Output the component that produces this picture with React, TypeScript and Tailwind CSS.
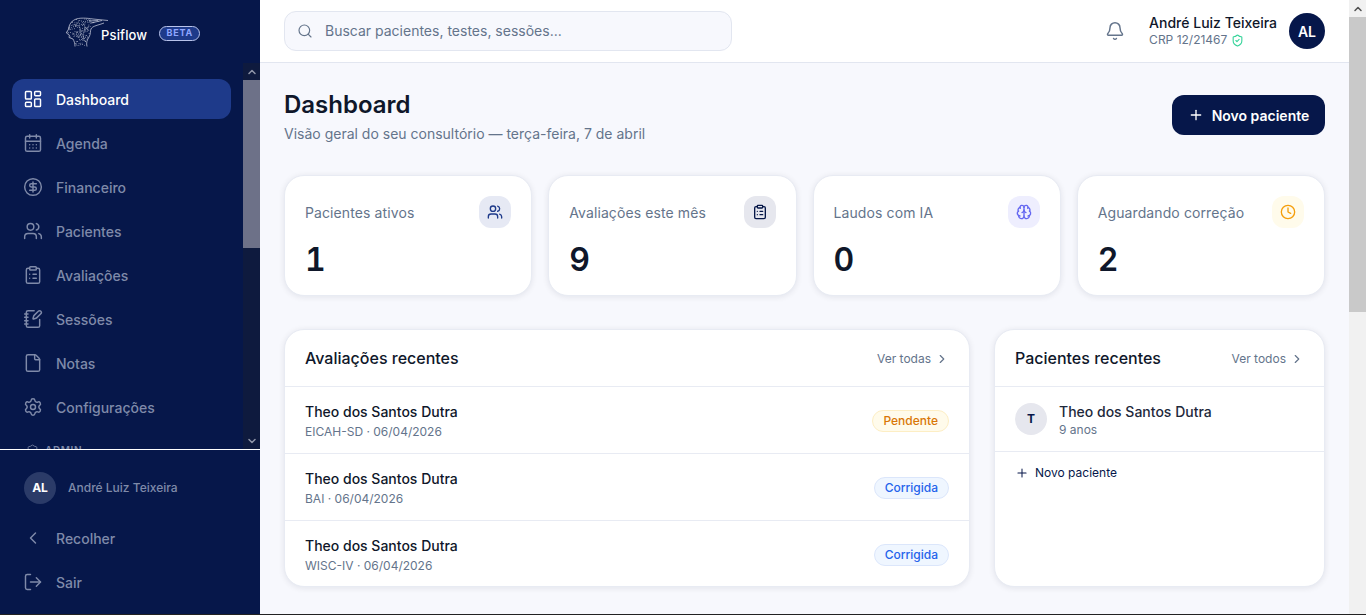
import React from "react";
import {
  Bell,
  Brain,
  CalendarDays,
  ChevronDown,
  ChevronLeft,
  ChevronRight,
  ChevronUp,
  CircleDollarSign,
  ClipboardList,
  Clock,
  File,
  LayoutDashboard,
  LogOut,
  NotebookPen,
  Plus,
  Search,
  Settings,
  Shield,
  ShieldCheck,
  Users,
} from "lucide-react";

const navItems = [
  { label: "Dashboard", icon: LayoutDashboard, active: true },
  { label: "Agenda", icon: CalendarDays },
  { label: "Financeiro", icon: CircleDollarSign },
  { label: "Pacientes", icon: Users },
  { label: "Avaliações", icon: ClipboardList },
  { label: "Sessões", icon: NotebookPen },
  { label: "Notas", icon: File },
  { label: "Configurações", icon: Settings },
];

const stats = [
  { label: "Pacientes ativos", value: "1", icon: Users, box: "bg-[#e6e9f4] text-[#1e3a8a]" },
  { label: "Avaliações este mês", value: "9", icon: ClipboardList, box: "bg-[#e6e7ee] text-[#061748]" },
  { label: "Laudos com IA", value: "0", icon: Brain, box: "bg-[#eeeefe] text-[#6366f1]" },
  { label: "Aguardando correção", value: "2", icon: Clock, box: "bg-[#fffbeb] text-[#f59e0b]" },
];

const evaluations = [
  { name: "Theo dos Santos Dutra", sub: "EICAH-SD · 06/04/2026", status: "Pendente" },
  { name: "Theo dos Santos Dutra", sub: "BAI · 06/04/2026", status: "Corrigida" },
  { name: "Theo dos Santos Dutra", sub: "WISC-IV · 06/04/2026", status: "Corrigida" },
];

// left/right edge of the head silhouette for each dotted row
const headRows: [number, number, number][] = [
  [2.5, 11, 26], [4, 7, 34], [5.5, 6, 30], [7, 5, 27], [8.5, 4.5, 26], [10, 4, 26], [11.5, 3.5, 25],
  [13, 3, 25], [14.5, 2.5, 25], [16, 3, 24], [17.5, 4, 24], [19, 5, 23], [20.5, 6, 23], [22, 8, 22],
  [23.5, 10, 21], [25, 10, 21], [26.5, 10, 21], [28, 11, 20],
];

function Logo() {
  const dots: [number, number][] = [];
  headRows.forEach(([y, from, to], row) => {
    for (let x = from + (row % 2) * 0.9; x <= to; x += 1.8) {
      // skip some and nudge the rest so the texture doesn't read as a grid
      if (Math.sin(x * 7.3 + y * 3.1) > 0.55) continue;
      dots.push([x + Math.sin(y * x) * 0.5, y + Math.cos(x * 2.7) * 0.5]);
    }
  });
  return (
    <svg width="44" height="30" viewBox="0 0 44 30" fill="none" stroke="#d5d9e6" strokeWidth="0.7">
      <path d="M10 29.5C10 26 9 24 8 22l-4-1.500.4-2.500-3-2 2.200-4C4 9 5 5 10 2.500 14 .5 22 1 28 2l15 1.500" />
      <path d="M22 29.500C21 26 22 23 24 20c2-3 1-6 2-8 1-3 8-4 13-6M26 6l11-2.500M24 4l9-.5" />
      <path d="M10 8c2 0 5 1 5 3s1 4 1 6-2 2-4 3M17 5c2 2 3 4 3 6s-2 5-2 7 1 4 1 6M24 9c-2 1-3 3-4 5" strokeWidth="0.4" />
      {dots.map(([x, y]) => (
        <circle key={`${x}-${y}`} cx={x} cy={y} r="0.45" fill="#e4e7f0" stroke="none" />
      ))}
    </svg>
  );
}

function Sidebar() {
  return (
    <aside className="flex w-[260px] shrink-0 flex-col bg-[#06174a]">
      <div className="flex h-[63px] shrink-0 items-center pl-[65px]">
        <Logo />
        <span className="-ml-[8px] mt-[8px] text-[13px] font-medium leading-none tracking-[0.15px] text-white">Psiflow</span>
        <span className="ml-[12px] mt-[3px] flex h-[15px] w-[41px] items-center justify-center rounded-full border border-[#b8c3ea] bg-[#1e3a8a] text-[9px] font-bold tracking-[0.8px] text-[#8ea6ff]">
          BETA
        </span>
      </div>
      <div className="flex h-[387px] shrink-0 border-b border-white">
        <nav className="flex flex-1 flex-col gap-[4px] overflow-hidden px-[12px] pt-[16px]">
          {navItems.map((item) => (
            <div
              key={item.label}
              className={
                item.active
                  ? "flex h-[40px] shrink-0 items-center gap-[12px] rounded-xl bg-[#1e3a8a] px-[12px] text-white"
                  : "flex h-[40px] shrink-0 items-center gap-[12px] rounded-xl px-[12px] text-[#7f8aa9]"
              }
            >
              <item.icon size={20} strokeWidth={1.75} className="shrink-0 -translate-x-px" />
              <span className="text-[14px] font-medium">{item.label}</span>
            </div>
          ))}
          <div className="mt-[12px] flex shrink-0 items-center gap-[6px] px-[14px] text-[#7f8aa9]">
            <Shield size={13} strokeWidth={1.5} />
            <span className="text-[10px] font-semibold tracking-[0.6px]">ADMIN</span>
          </div>
        </nav>
        <div className="flex w-[17px] flex-col bg-[#0e1a3e]">
          <div className="flex h-[17px] items-center justify-center text-[#8f95a8]">
            <ChevronUp size={12} strokeWidth={3} />
          </div>
          <div className="h-[168px] bg-[#6d7188]" />
          <div className="flex-1" />
          <div className="flex h-[17px] items-center justify-center text-[#8f95a8]">
            <ChevronDown size={12} strokeWidth={3} />
          </div>
        </div>
      </div>
      <div className="flex flex-col px-[12px] pt-[22px]">
        <div className="flex items-center gap-[12px] px-[12px]">
          <div className="flex h-[32px] w-[32px] items-center justify-center rounded-full bg-[#2b3b68] text-[12px] font-bold text-white">
            AL
          </div>
          <span className="text-[12px] font-medium text-[#7f8aa9]">André Luiz Teixeira</span>
        </div>
        <div className="mt-[14px] flex h-[40px] items-center gap-[12px] px-[12px] text-[#7f8aa9]">
          <ChevronLeft size={20} strokeWidth={1.75} className="shrink-0 -translate-x-px" />
          <span className="text-[14px] font-medium">Recolher</span>
        </div>
        <div className="mt-[4px] flex h-[40px] items-center gap-[12px] px-[12px] text-[#7f8aa9]">
          <LogOut size={20} strokeWidth={1.75} className="shrink-0 -translate-x-px" />
          <span className="text-[14px] font-medium">Sair</span>
        </div>
      </div>
    </aside>
  );
}

function Header() {
  return (
    <header className="flex h-[63px] shrink-0 items-center justify-between border-b border-[#e2e6f0] bg-white pl-[24px] pr-[24px]">
      <div className="flex h-[40px] w-[448px] items-center gap-[12px] rounded-xl border border-[#e2e6f0] bg-[#f7f8fd] pl-[12px] text-[#64748b]">
        <Search size={16} strokeWidth={1.75} />
        <span className="text-[14px] leading-[18px]">Buscar pacientes, testes, sessões...</span>
      </div>
      <div className="flex items-center">
        <Bell size={20} strokeWidth={1.75} className="text-[#64748b]" />
        <div className="ml-[24px] flex flex-col">
          <span className="text-[14px] font-medium leading-[18px] text-[#0f172a]">André Luiz Teixeira</span>
          <span className="flex items-center gap-[4px] text-[12px] leading-[16px] text-[#64748b]">
            CRP 12/21467
            <ShieldCheck size={13} strokeWidth={2} className="text-[#34d399]" />
          </span>
        </div>
        <div className="ml-[12px] flex h-[36px] w-[36px] items-center justify-center rounded-full bg-[#06174a] text-[14px] font-semibold text-white">
          AL
        </div>
      </div>
    </header>
  );
}

function StatCard({ label, value, icon: Icon, box }: (typeof stats)[number]) {
  return (
    <div className="h-[121px] rounded-[20px] border border-[#e8ebf3] bg-white px-[20px] pt-[20px] shadow-[0_1px_6px_rgba(15,23,42,0.09)]">
      <div className="flex items-center justify-between">
        <span className="text-[14px] tracking-[0.1px] text-[#64748b]">{label}</span>
        <div className={`flex h-[32px] w-[32px] items-center justify-center rounded-xl ${box}`}>
          <Icon size={16} strokeWidth={2} />
        </div>
      </div>
      <div className="mt-[12px] text-[32px] font-semibold leading-[40px] tabular-nums text-[#0f172a]">{value}</div>
    </div>
  );
}

function Panel({ title, link, children }: { title: string; link: string; children: React.ReactNode }) {
  return (
    <section className="h-[258px] overflow-hidden rounded-[20px] border border-[#e8ebf3] bg-white shadow-[0_1px_6px_rgba(15,23,42,0.09)]">
      <div className="flex h-[57px] items-center justify-between border-b border-[#e8ebf3] px-[20px]">
        <h2 className="text-[16px] font-medium text-[#0f172a]">{title}</h2>
        <span className="mt-[2px] flex items-center gap-[4px] text-[12px] text-[#64748b]">
          {link}
          <ChevronRight size={14} strokeWidth={2} />
        </span>
      </div>
      {children}
    </section>
  );
}

function StatusBadge({ status }: { status: string }) {
  const color =
    status === "Pendente"
      ? "border-[#fdeec4] bg-[#fffbeb] text-[#d97706]"
      : "border-[#dbe6fb] bg-[#eff6ff] text-[#2563eb]";
  return (
    <span className={`mt-[2px] flex h-[22px] items-center rounded-full border px-[10px] text-[12px] font-medium ${color}`}>{status}</span>
  );
}

export default function App() {
  return (
    <div className="flex h-screen flex-col overflow-hidden bg-[#f7f8fd] font-['Inter',sans-serif]">
      <div className="flex min-h-0 flex-1">
        <Sidebar />
        <div className="flex min-w-0 flex-1 flex-col">
          <Header />
          <main className="flex-1 px-[24px] pt-[24px]">
            <div className="flex items-start justify-between pt-[4px]">
              <div>
                <h1 className="text-[24px] font-semibold leading-[28px] text-[#0f172a]">Dashboard</h1>
                <p className="mt-[5px] text-[14px] leading-[20px] text-[#64748b]">
                  Visão geral do seu consultório — terça-feira, 7 de abril
                </p>
              </div>
              <button className="mt-[4px] flex h-[40px] w-[153px] items-center justify-center gap-[8px] rounded-xl bg-[#06174a] text-[14px] font-semibold text-white">
                <Plus size={16} strokeWidth={2} />
                Novo paciente
              </button>
            </div>
            <div className="mt-[31px] grid grid-cols-4 gap-[16px]">
              {stats.map((stat) => (
                <StatCard key={stat.label} {...stat} />
              ))}
            </div>
            <div className="mt-[33px] grid grid-cols-[686px_331px] gap-[24px]">
              <Panel title="Avaliações recentes" link="Ver todas">
                {evaluations.map((row, i) => (
                  <div
                    key={row.sub}
                    className={
                      i < 2
                        ? "flex h-[67px] items-center justify-between border-b border-[#e8ebf3] px-[20px]"
                        : "flex h-[65px] items-center justify-between px-[20px]"
                    }
                  >
                    <div className="pt-[2px]">
                      <div className="text-[14px] font-medium leading-[20px] text-[#0f172a]">{row.name}</div>
                      <div className="mt-[2px] text-[12px] leading-[16px] text-[#64748b]">{row.sub}</div>
                    </div>
                    <StatusBadge status={row.status} />
                  </div>
                ))}
              </Panel>
              <Panel title="Pacientes recentes" link="Ver todos">
                <div className="flex h-[65px] items-center gap-[12px] border-b border-[#e8ebf3] px-[20px]">
                  <div className="flex h-[32px] w-[32px] items-center justify-center rounded-full bg-[#e6e7ee] text-[12px] font-bold text-[#06174a]">
                    T
                  </div>
                  <div className="pt-[3px]">
                    <div className="text-[14px] font-medium leading-[18px] text-[#1e293b]">Theo dos Santos Dutra</div>
                    <div className="mt-[1px] text-[12px] leading-[16px] text-[#64748b]">9 anos</div>
                  </div>
                </div>
                <div className="flex items-center gap-[6px] px-[20px] pt-[12px] text-[12px] text-[#06174a]">
                  <Plus size={14} strokeWidth={1.75} />
                  Novo paciente
                </div>
              </Panel>
            </div>
          </main>
        </div>
        <div className="flex w-[17px] shrink-0 flex-col bg-[#f1f1f1]">
          <div className="flex h-[17px] items-center justify-center text-[#505050]">
            <ChevronUp size={12} strokeWidth={3} />
          </div>
          <div className="h-[295px] bg-[#c9c9c9]" />
        </div>
      </div>
      <div className="h-px shrink-0 bg-[#222222]" />
    </div>
  );
}
